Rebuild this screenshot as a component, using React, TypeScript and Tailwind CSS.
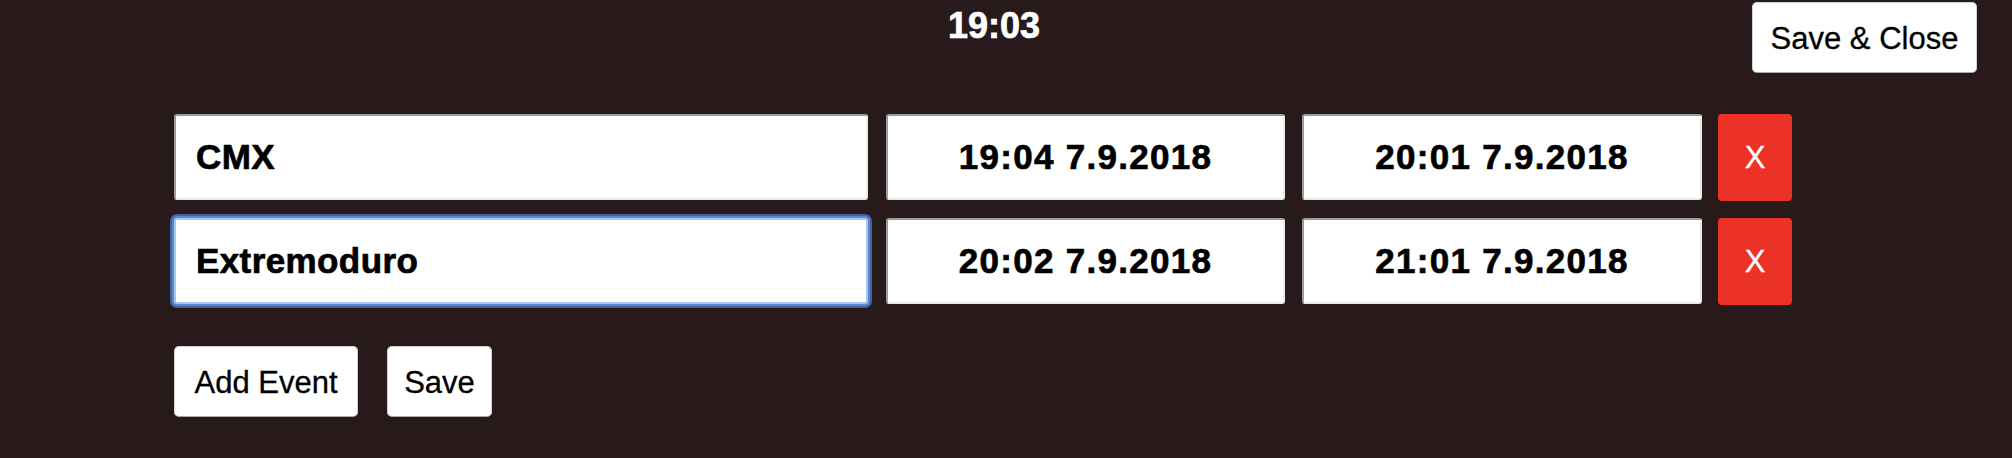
import React from "react";

const inset =
  "border-2 border-t-[#9c9c9c] border-l-[#9c9c9c] border-b-[#e9e9e9] border-r-[#e9e9e9] rounded-[3px] bg-white";

const macBtn =
  "bg-white rounded-[5px] border border-[#d2d2d2] border-b-[#a8a8a8] text-black text-[31px] [-webkit-text-stroke:0.3px_#000] flex items-center justify-center pt-[4px]";

const heavy = "[-webkit-text-stroke:0.7px_#000]";

function Row({
  name,
  start,
  end,
  focused,
}: {
  name: string;
  start: string;
  end: string;
  focused?: boolean;
}) {
  return (
    <div className="flex h-[86px] items-stretch">
      <input
        readOnly
        value={name}
        className={
          focused
            ? `w-[694px] h-full bg-white rounded-[3px] border-2 border-[#a9c6ef] shadow-[0_0_0_2px_#5b8ad3,0_0_0_4px_#42649a] pl-[20px] text-[35px] font-bold tracking-[0.4px] text-black outline-none ${heavy}`
            : `w-[694px] h-full ${inset} pl-[20px] text-[35px] font-bold tracking-[0.4px] text-black outline-none ${heavy}`
        }
      />
      <input
        readOnly
        value={start}
        className={`ml-[18px] w-[399px] h-full ${inset} text-center text-[35px] font-bold tracking-[1.3px] text-black outline-none ${heavy}`}
      />
      <input
        readOnly
        value={end}
        className={`ml-[17px] w-[400px] h-full ${inset} text-center text-[35px] font-bold tracking-[1.3px] text-black outline-none ${heavy}`}
      />
      <button className="ml-[16px] w-[74px] h-[87px] bg-[#ec3226] rounded-[4px] text-white text-[31px] [-webkit-text-stroke:0.3px_#fff] flex items-center justify-center pt-[2px]">
        X
      </button>
    </div>
  );
}

export default function App() {
  return (
    <div className="w-full h-[458px] overflow-hidden bg-[#28191a] font-['Liberation_Sans',Arial,sans-serif]">
      <div className="grid grid-cols-[1fr_auto_1fr] items-start pt-[2px]">
        <div />
        <div className="mt-[6px] mr-[24px] text-white text-[36px] font-bold leading-none [-webkit-text-stroke:0.7px_#fff]">
          19:03
        </div>
        <div className="flex justify-end pr-[35px]">
          <button className={`${macBtn} w-[225px] h-[71px]`}>Save &amp; Close</button>
        </div>
      </div>

      <div className="mt-[41px] pl-[174px] flex flex-col gap-[18px]">
        <Row name="CMX" start="19:04 7.9.2018" end="20:01 7.9.2018" />
        <Row name="Extremoduro" start="20:02 7.9.2018" end="21:01 7.9.2018" focused />
      </div>

      <div className="mt-[42px] pl-[174px] flex gap-[29px]">
        <button className={`${macBtn} w-[184px] h-[71px]`}>Add Event</button>
        <button className={`${macBtn} w-[105px] h-[71px]`}>Save</button>
      </div>
    </div>
  );
}
